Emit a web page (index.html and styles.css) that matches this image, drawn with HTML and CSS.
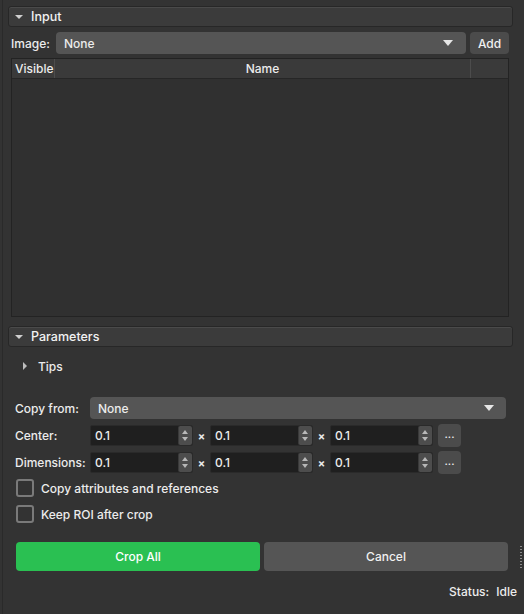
FILE: index.html
```html
<!DOCTYPE html>
<html lang="en">
<head>
    <meta charset="UTF-8">
    <meta name="viewport" content="width=device-width, initial-scale=1.0">
    <title>Crop</title>
    <link rel="stylesheet" href="styles.css">
</head>
<body>
    <div class="app">
        <div class="section-header"><span class="caret-down"></span>Input</div>

        <div class="image-row">
            <span class="label">Image:</span>
            <div class="combo"><span>None</span><span class="combo-arrow"></span></div>
            <div class="button add-button">Add</div>
        </div>

        <div class="layer-table">
            <div class="table-head">
                <div class="col-visible">Visible</div>
                <div class="col-name">Name</div>
                <div class="col-extra"></div>
            </div>
            <div class="table-body"></div>
        </div>

        <div class="section-header params-header"><span class="caret-down"></span>Parameters</div>

        <div class="params">
            <div class="tips-row"><span class="caret-right"></span>Tips</div>

            <div class="form-row copy-row">
                <span class="form-label">Copy from:</span>
                <div class="combo"><span>None</span><span class="combo-arrow"></span></div>
            </div>

            <div class="form-row center-row">
                <span class="form-label">Center:</span>
                <div class="spin"><span>0.1</span><span class="spin-buttons"></span></div>
                <span class="times">×</span>
                <div class="spin"><span>0.1</span><span class="spin-buttons"></span></div>
                <span class="times">×</span>
                <div class="spin"><span>0.1</span><span class="spin-buttons"></span></div>
                <div class="button more-button">...</div>
            </div>

            <div class="form-row">
                <span class="form-label">Dimensions:</span>
                <div class="spin"><span>0.1</span><span class="spin-buttons"></span></div>
                <span class="times">×</span>
                <div class="spin"><span>0.1</span><span class="spin-buttons"></span></div>
                <span class="times">×</span>
                <div class="spin"><span>0.1</span><span class="spin-buttons"></span></div>
                <div class="button more-button">...</div>
            </div>

            <label class="check-row"><span class="checkbox"></span>Copy attributes and references</label>
            <label class="check-row"><span class="checkbox"></span>Keep ROI after crop</label>

            <div class="actions">
                <div class="button crop-button">Crop All</div>
                <div class="button cancel-button">Cancel</div>
            </div>

            <div class="status"><span>Status:</span><span>Idle</span></div>
        </div>

        <div class="grip"></div>
    </div>
</body>
</html>
```

FILE: styles.css
```css
html, body {
    margin: 0;
    padding: 0;
    width: 100%;
    height: 100%;
    background-color: #333333;
    color: #ececec;
    font-family: Inter, 'Noto Sans', sans-serif;
    font-size: 12px;
    font-weight: 500;
    overflow: hidden;
}

.app {
    position: relative;
    box-sizing: border-box;
    height: 100%;
    margin-left: 2px;
    padding: 6px 11px 0 5px;
    border-left: 1px solid #2a2a2a;
}

/* collapsible section bars */
.section-header {
    display: flex;
    align-items: center;
    height: 21px;
    box-sizing: border-box;
    padding-left: 6px;
    background-color: #3b3b3b;
    border: 1px solid #272727;
    border-radius: 3px;
    box-shadow: inset 0 1px 0 #4a4a4a;
    color: #f2f2f2;
    font-size: 12.5px;
}

.caret-down {
    width: 0;
    height: 0;
    border-left: 4px solid transparent;
    border-right: 4px solid transparent;
    border-top: 4.5px solid #cfcfcf;
    margin-right: 8px;
}

.caret-right {
    width: 0;
    height: 0;
    border-top: 4px solid transparent;
    border-bottom: 4px solid transparent;
    border-left: 4.5px solid #bdbdbd;
    margin-right: 11px;
}

.image-row {
    display: flex;
    align-items: center;
    height: 22px;
    margin: 5px 4px 0 3px;
}

    .image-row .label {
        width: 45px;
    }

.combo {
    flex: 1;
    display: flex;
    align-items: center;
    justify-content: space-between;
    height: 22px;
    padding: 0 13px 0 8px;
    background-color: #555555;
    border-radius: 4px;
}

.combo-arrow {
    width: 0;
    height: 0;
    border-left: 5px solid transparent;
    border-right: 5px solid transparent;
    border-top: 6px solid #e6e6e6;
}

.button {
    display: flex;
    align-items: center;
    justify-content: center;
    background-color: #4b4b4b;
    border-radius: 4px;
    color: #f0f0f0;
}

.add-button {
    width: 39px;
    height: 22px;
    margin-left: 4px;
}

/* layer list */
.layer-table {
    display: flex;
    flex-direction: column;
    height: 259px;
    margin: 4px 4px 0 3px;
    border: 1px solid #232323;
    box-sizing: border-box;
}

.table-head {
    display: flex;
    height: 19px;
    background-color: #3a3a3a;
    border-bottom: 1px solid #262626;
}

    .table-head div {
        display: flex;
        align-items: center;
    }

.col-visible {
    width: 39px;
    padding-left: 3px;
    border-right: 1px solid #4c4c4c;
}

.col-name {
    flex: 1;
    justify-content: center;
    border-right: 1px solid #4c4c4c;
}

.col-extra {
    width: 37px;
}

.table-body {
    flex: 1;
    background-color: #303030;
}

.params-header {
    margin-top: 9px;
}

.params {
    padding: 0 5px 0 7px;
}

.tips-row {
    display: flex;
    align-items: center;
    height: 20px;
    margin-top: 9px;
    padding-left: 8px;
}

.form-row {
    display: flex;
    align-items: center;
    height: 23px;
    margin-top: 4px;
}

.center-row {
    margin-top: 5px;
}

.copy-row {
    height: 22px;
    margin-top: 21px;
    margin-right: 2px;
}

    .copy-row .combo {
        padding-right: 12px;
    }

.form-label {
    width: 75px;
}

/* numeric fields with up/down steppers */
.spin {
    display: flex;
    align-items: center;
    justify-content: space-between;
    box-sizing: border-box;
    width: 103px;
    height: 21px;
    padding-left: 4px;
    background-color: #1f1f1f;
    border: 1px solid #2a2a2a;
    border-radius: 2px;
}

.spin-buttons {
    position: relative;
    width: 13px;
    height: 19px;
    background-color: #4d4d4d;
    border-left: 1px solid #3a3a3a;
    border-radius: 2px;
}

    .spin-buttons::before,
    .spin-buttons::after {
        content: '';
        position: absolute;
        left: 3px;
        width: 0;
        height: 0;
        border-left: 3.5px solid transparent;
        border-right: 3.5px solid transparent;
    }

    .spin-buttons::before {
        top: 4px;
        border-bottom: 4px solid #b8b8b8;
    }

    .spin-buttons::after {
        bottom: 4px;
        border-top: 4px solid #b8b8b8;
    }

.times {
    width: 17px;
    text-align: center;
    font-weight: 700;
    font-size: 11px;
}

.more-button {
    width: 23px;
    height: 23px;
    margin-left: 5px;
    font-size: 11px;
    padding-bottom: 3px;
    box-sizing: border-box;
}

.check-row {
    display: flex;
    align-items: center;
    height: 20px;
    margin-top: 4px;
    padding-left: 1px;
}

    .check-row + .check-row {
        margin-top: 6px;
    }

.checkbox {
    width: 14px;
    height: 14px;
    margin-right: 7px;
    border: 2px solid #7a7a7a;
    border-radius: 3px;
}

.actions {
    display: flex;
    gap: 4px;
    margin-top: 18px;
    padding-left: 1px;
}

.crop-button,
.cancel-button {
    flex: 1;
    height: 29px;
}

.crop-button {
    background-color: #2ac052;
    color: #ffffff;
}

.cancel-button {
    background-color: #555555;
}

.status {
    display: flex;
    justify-content: flex-end;
    gap: 7px;
    margin: 13px -9px 0 0;
    font-size: 12px;
}

/* resize grip on the right edge */
.grip {
    position: absolute;
    right: 2px;
    top: 546px;
    width: 2px;
    height: 22px;
    background-image: repeating-linear-gradient(to bottom, #8a8a8a 0 1px, transparent 1px 3px);
}
```
